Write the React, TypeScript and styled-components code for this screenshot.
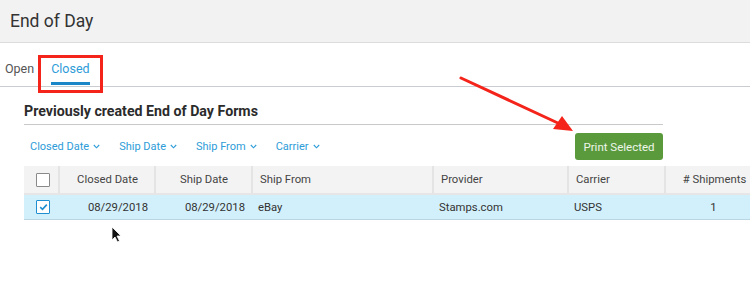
import * as React from 'react';
import styled, { createGlobalStyle } from 'styled-components';

const GlobalStyle = createGlobalStyle`
  html, body {
    margin: 0;
    padding: 0;
    background: #ffffff;
    overflow: hidden;
  }
  body {
    font-family: Roboto, 'Liberation Sans', sans-serif;
    color: #333;
  }
`;

const Page = styled.div`
  position: relative;
  width: 750px;
  height: 303px;
  overflow: hidden;
`;

const TopBar = styled.div`
  height: 42px;
  background: #f2f2f2;
  border-bottom: 1px solid #dcdcdc;
  display: flex;
  align-items: center;
  padding-left: 10px;
  font-size: 17.5px;
  color: #333;
`;

const TabBar = styled.div`
  display: flex;
  align-items: stretch;
  height: 43px;
  border-bottom: 1px solid #c9ccd0;
  padding-left: 5px;
  gap: 17px;
`;

const Tab = styled.div<{ active?: boolean }>`
  position: relative;
  display: flex;
  align-items: flex-end;
  font-size: 12.5px;
  line-height: 14px;
  color: ${(p) => (p.active ? '#2d9cd8' : '#555')};
  padding-bottom: 6px;
  border-bottom: 3px solid ${(p) => (p.active ? '#1a86c8' : 'transparent')};
  margin-bottom: 1px;
`;

const Highlight = styled.div`
  position: absolute;
  left: -13px;
  right: -13px;
  top: 12px;
  height: 38px;
  box-sizing: border-box;
  border: 3px solid #f4241b;
  pointer-events: none;
`;

const Section = styled.div`
  padding: 0 0 0 24px;
`;

const Heading = styled.div`
  width: 639px;
  height: 38px;
  display: flex;
  align-items: flex-end;
  padding-bottom: 5px;
  box-sizing: border-box;
  border-bottom: 1px solid #c9c9c9;
  font-size: 14.2px;
  line-height: 16px;
  font-weight: 700;
  color: #2b2b2b;
`;

const Toolbar = styled.div`
  width: 639px;
  height: 41px;
  display: flex;
  align-items: center;
  justify-content: space-between;
  padding-top: 2px;
  box-sizing: border-box;
`;

const Filters = styled.div`
  display: flex;
  gap: 19px;
  padding-left: 6px;
`;

const Filter = styled.div`
  display: flex;
  align-items: center;
  gap: 4px;
  font-size: 11px;
  color: #2d9cd8;
`;

const PrintButton = styled.button`
  width: 88px;
  height: 27px;
  border: none;
  border-radius: 3px;
  background: #5a9a3d;
  color: #eef6ea;
  font-family: Roboto, 'Liberation Sans', sans-serif;
  font-size: 11.5px;
  padding: 0;
`;

const Table = styled.div`
  width: 738px;
`;

const Row = styled.div<{ header?: boolean; selected?: boolean }>`
  display: grid;
  grid-template-columns: 34px 96px 97px 181px 135px 97px 98px;
  height: ${(p) => (p.header ? '27px' : '24px')};
  background: ${(p) => (p.header ? '#f3f3f3' : p.selected ? '#d2f0fb' : '#fff')};
  border-bottom: ${(p) => (p.header ? '2px solid #e6e6e6' : '1px solid #b9d6e2')};
  font-size: 11.3px;
  color: ${(p) => (p.header ? '#444' : '#333')};
`;

const Cell = styled.div<{ align?: 'left' | 'center' | 'right'; sep?: boolean }>`
  display: flex;
  align-items: center;
  justify-content: ${(p) =>
    p.align === 'center' ? 'center' : p.align === 'right' ? 'flex-end' : 'flex-start'};
  padding: 0 6px 0 7px;
  border-left: ${(p) => (p.sep ? '2px solid #e4e4e4' : 'none')};
  white-space: nowrap;
  overflow: hidden;
`;

const Check = styled.div<{ checked?: boolean }>`
  width: 12px;
  height: 12px;
  margin-left: 3px;
  border: 1px solid ${(p) => (p.checked ? '#1f8fd2' : '#8a8a8a')};
  border-radius: 1px;
  background: #fff;
  display: flex;
  align-items: center;
  justify-content: center;
`;

const Overlay = styled.svg`
  position: absolute;
  left: 0;
  top: 0;
  pointer-events: none;
`;

const ChevronDown = () => (
  <svg width="7" height="5" viewBox="0 0 7 5">
    <path d="M0.8 1 L3.5 3.8 L6.2 1" fill="none" stroke="#2d9cd8" strokeWidth="1.1" />
  </svg>
);

const Tick = () => (
  <svg width="9" height="8" viewBox="0 0 9 8">
    <path d="M1.2 4.2 L3.5 6.3 L7.8 1.6" fill="none" stroke="#1f8fd2" strokeWidth="1.6" />
  </svg>
);

const filters = ['Closed Date', 'Ship Date', 'Ship From', 'Carrier'];

export default function App() {
  return (
    <Page>
      <GlobalStyle />
      <TopBar>End of Day</TopBar>
      <TabBar>
        <Tab>Open</Tab>
        <Tab active>
          Closed
          <Highlight />
        </Tab>
      </TabBar>
      <Section>
        <Heading>Previously created End of Day Forms</Heading>
        <Toolbar>
          <Filters>
            {filters.map((f) => (
              <Filter key={f}>
                {f}
                <ChevronDown />
              </Filter>
            ))}
          </Filters>
          <PrintButton>Print Selected</PrintButton>
        </Toolbar>
        <Table>
          <Row header>
            <Cell align="center">
              <Check />
            </Cell>
            <Cell align="center" sep>Closed Date</Cell>
            <Cell align="center" sep>Ship Date</Cell>
            <Cell sep>Ship From</Cell>
            <Cell sep>Provider</Cell>
            <Cell sep>Carrier</Cell>
            <Cell align="center" sep>
              # Shipments
            </Cell>
          </Row>
          <Row selected>
            <Cell align="center">
              <Check checked>
                <Tick />
              </Check>
            </Cell>
            <Cell align="right">08/29/2018</Cell>
            <Cell align="right">08/29/2018</Cell>
            <Cell>eBay</Cell>
            <Cell>Stamps.com</Cell>
            <Cell>USPS</Cell>
            <Cell align="center">1</Cell>
          </Row>
        </Table>
      </Section>
      <Overlay width="750" height="303">
        <line x1="461" y1="78" x2="560" y2="124" stroke="#f4241b" strokeWidth="3" strokeLinecap="round" />
        <polygon points="573,131 553,129 562,116" fill="#f4241b" />
        <path
          d="M112 227 L112 240 L115 237 L117.5 242 L119.5 241 L117 236 L121 236 Z"
          fill="#111"
          stroke="#fff"
          strokeWidth="0.8"
        />
      </Overlay>
    </Page>
  );
}
